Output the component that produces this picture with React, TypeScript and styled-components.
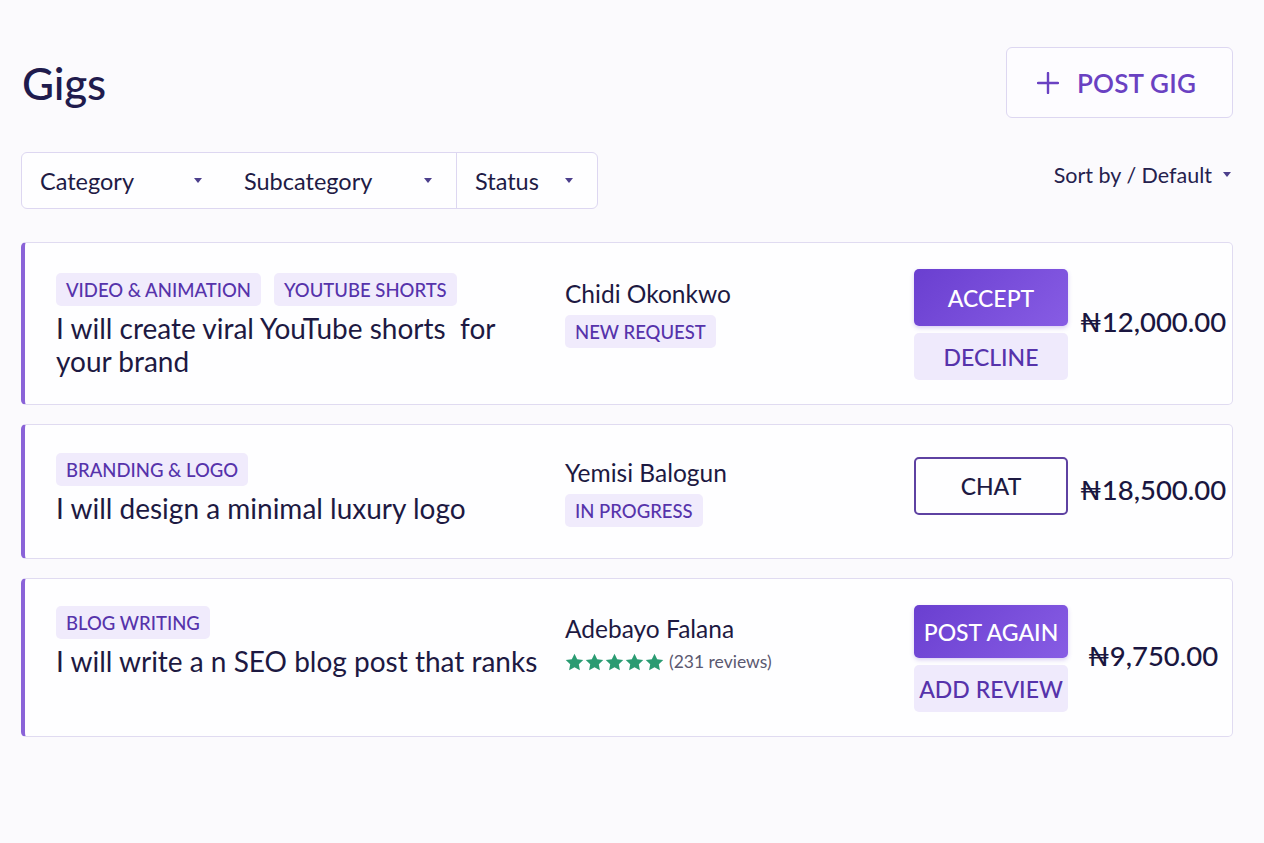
import styled, { createGlobalStyle } from "styled-components";

const GlobalStyle = createGlobalStyle`
  html, body {
    margin: 0;
    padding: 0;
    background: #fbfafd;
  }
  body {
    font-family: Lato, "Noto Sans", "DejaVu Sans", sans-serif;
    color: #1e1a45;
  }
  * { box-sizing: border-box; }
`;

const Page = styled.div`
  width: 1264px;
  min-height: 843px;
  padding: 47px 31px 0 21px;
`;

const Header = styled.div`
  display: flex;
  justify-content: space-between;
  align-items: center;
`;

const Title = styled.h1`
  margin: 0 0 0 1px;
  font-size: 44px;
  font-weight: 500;
  color: #1f1b4d;
  letter-spacing: -0.2px;
`;

const PostButton = styled.button`
  display: flex;
  align-items: center;
  justify-content: center;
  gap: 18px;
  width: 227px;
  height: 71px;
  padding: 0 6px 0 0;
  background: #fdfcff;
  border: 1.5px solid #ddd7f1;
  border-radius: 6px;
  font-family: inherit;
  font-size: 26px;
  font-weight: 600;
  color: #6a41c2;
  letter-spacing: 0.2px;
`;

const Toolbar = styled.div`
  display: flex;
  justify-content: space-between;
  align-items: center;
  margin-top: 34px;
`;

const FilterGroup = styled.div`
  display: flex;
  height: 57px;
  background: #fefeff;
  border: 1.5px solid #ddd7f1;
  border-radius: 6px;
`;

const Filter = styled.div<{ $width: number; $divider?: boolean }>`
  display: flex;
  align-items: center;
  justify-content: space-between;
  width: ${(p) => p.$width}px;
  padding: 0 24px 0 18px;
  border-left: ${(p) => (p.$divider ? "1.5px solid #ddd7f1" : "none")};
  font-size: 23.5px;
  color: #1f1b45;
`;

const Caret = styled.span`
  width: 0;
  height: 0;
  border-left: 4.5px solid transparent;
  border-right: 4.5px solid transparent;
  border-top: 5px solid #4c3f8c;
`;

const Sort = styled.div`
  display: flex;
  align-items: center;
  gap: 11px;
  margin-right: 2px;
  margin-top: -12px;
  font-size: 21.5px;
  color: #25214d;
`;

const List = styled.div`
  display: flex;
  flex-direction: column;
  gap: 19px;
  margin-top: 33px;
`;

const Card = styled.div<{ $minH?: number }>`
  display: grid;
  grid-template-columns: 500px 340px 154px 152px;
  column-gap: 9px;
  min-height: ${(p) => (p.$minH ? `${p.$minH}px` : "0")};
  padding: 26px 3px 24px 31px;
  background: #fefeff;
  border: 1px solid #e0dbf1;
  border-left: 4px solid #8a63d8;
  border-radius: 5px;
`;

const Main = styled.div<{ $top: number }>`
  padding-top: ${(p) => p.$top}px;
`;

const Tags = styled.div`
  display: flex;
  gap: 13px;
`;

const Tag = styled.span`
  display: inline-flex;
  align-items: center;
  height: 33px;
  padding: 0 10px;
  background: #f0ebfc;
  border-radius: 5px;
  font-size: 18.5px;
  font-weight: 500;
  color: #5633ab;
`;

const GigTitle = styled.div`
  margin-top: 6px;
  font-size: 28px;
  line-height: 33px;
  color: #1d1942;
`;

const Client = styled.div<{ $top: number }>`
  padding-top: ${(p) => p.$top}px;
`;

const Name = styled.div`
  font-size: 24.5px;
  line-height: 28px;
  color: #1d1942;
`;

const Badge = styled(Tag)`
  height: 33px;
  margin-top: 7px;
`;

const Rating = styled.div`
  display: flex;
  align-items: center;
  gap: 5px;
  margin-top: 8px;
  font-size: 17.5px;
  color: #5a5870;
`;

const Actions = styled.div<{ $top?: number }>`
  display: flex;
  flex-direction: column;
  justify-content: center;
  gap: 7px;
  align-self: ${(p) => (p.$top !== undefined ? "start" : "center")};
  margin-top: ${(p) => p.$top ?? 0}px;
`;

const ActionButton = styled.button<{ $variant: "primary" | "soft" | "outline"; $h: number }>`
  height: ${(p) => p.$h}px;
  width: 154px;
  padding: 0;
  border-radius: 5px;
  font-family: inherit;
  font-size: 23px;
  font-weight: 500;
  border: ${(p) => (p.$variant === "outline" ? "2px solid #5e41a2" : "none")};
  background: ${(p) =>
    p.$variant === "primary"
      ? "linear-gradient(135deg, #6a3fd0, #875ce4)"
      : p.$variant === "soft"
      ? "#efeafc"
      : "#fefeff"};
  color: ${(p) =>
    p.$variant === "primary" ? "#ffffff" : p.$variant === "soft" ? "#5633ab" : "#1d1942"};
  box-shadow: ${(p) => (p.$variant === "primary" ? "0 2px 4px rgba(110, 66, 211, 0.25)" : "none")};
`;

const Price = styled.div`
  align-self: center;
  text-align: center;
  font-size: 27.5px;
  font-weight: 500;
  color: #1a1640;
  margin-top: -6px;
`;

const StarRow = styled.span`
  display: flex;
  gap: 1px;
`;

function Plus() {
  return (
    <svg width="22" height="22" viewBox="0 0 22 22" fill="none">
      <path d="M11 1v20M1 11h20" stroke="#6a41c2" strokeWidth="2.4" strokeLinecap="round" />
    </svg>
  );
}

function Star() {
  return (
    <svg width="19" height="18" viewBox="0 0 24 23">
      <path
        d="M12 0.8l3.4 7.1 7.8 1-5.7 5.4 1.4 7.7L12 18.3 5.1 22l1.4-7.7L.8 8.9l7.8-1z"
        fill="#2a9b72"
      />
    </svg>
  );
}

function Stars() {
  return (
    <StarRow>
      {[0, 1, 2, 3, 4].map((i) => (
        <Star key={i} />
      ))}
    </StarRow>
  );
}

export default function App() {
  return (
    <>
      <GlobalStyle />
      <Page>
        <Header>
          <Title>Gigs</Title>
          <PostButton>
            <Plus />
            POST GIG
          </PostButton>
        </Header>

        <Toolbar>
          <FilterGroup>
            <Filter $width={204}>
              Category <Caret />
            </Filter>
            <Filter $width={230}>
              Subcategory <Caret />
            </Filter>
            <Filter $width={141} $divider>
              Status <Caret />
            </Filter>
          </FilterGroup>
          <Sort>
            Sort by / Default <Caret />
          </Sort>
        </Toolbar>

        <List>
          <Card>
            <Main $top={4}>
              <Tags>
                <Tag>VIDEO &amp; ANIMATION</Tag>
                <Tag>YOUTUBE SHORTS</Tag>
              </Tags>
              <GigTitle>I will create viral YouTube shorts&nbsp; for your brand</GigTitle>
            </Main>
            <Client $top={11}>
              <Name>Chidi Okonkwo</Name>
              <Badge>NEW REQUEST</Badge>
            </Client>
            <Actions>
              <ActionButton $variant="primary" $h={57}>ACCEPT</ActionButton>
              <ActionButton $variant="soft" $h={47}>DECLINE</ActionButton>
            </Actions>
            <Price>₦12,000.00</Price>
          </Card>

          <Card $minH={135}>
            <Main $top={2}>
              <Tags>
                <Tag>BRANDING &amp; LOGO</Tag>
              </Tags>
              <GigTitle>I will design a minimal luxury logo</GigTitle>
            </Main>
            <Client $top={8}>
              <Name>Yemisi Balogun</Name>
              <Badge>IN PROGRESS</Badge>
            </Client>
            <Actions $top={6}>
              <ActionButton $variant="outline" $h={58}>CHAT</ActionButton>
            </Actions>
            <Price>₦18,500.00</Price>
          </Card>

          <Card>
            <Main $top={1}>
              <Tags>
                <Tag>BLOG WRITING</Tag>
              </Tags>
              <GigTitle>I will write a n SEO blog post that ranks</GigTitle>
            </Main>
            <Client $top={10}>
              <Name>Adebayo Falana</Name>
              <Rating>
                <Stars />
                (231 reviews)
              </Rating>
            </Client>
            <Actions>
              <ActionButton $variant="primary" $h={53}>POST AGAIN</ActionButton>
              <ActionButton $variant="soft" $h={47}>ADD REVIEW</ActionButton>
            </Actions>
            <Price>₦9,750.00</Price>
          </Card>
        </List>
      </Page>
    </>
  );
}
